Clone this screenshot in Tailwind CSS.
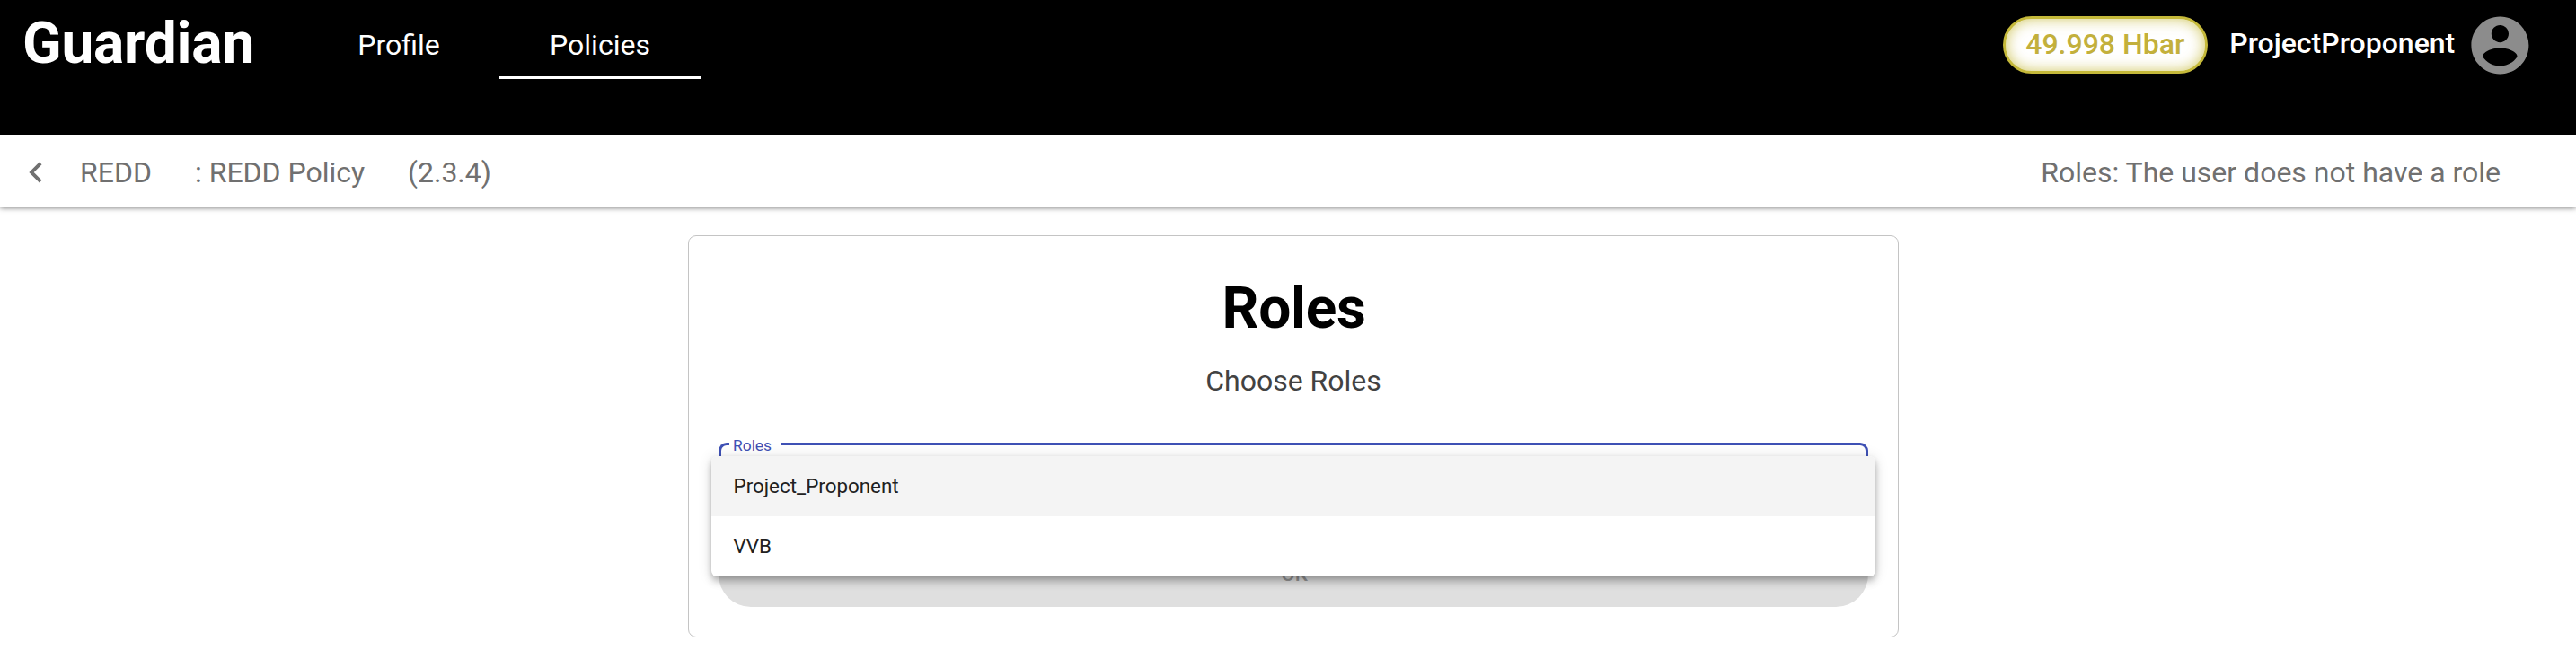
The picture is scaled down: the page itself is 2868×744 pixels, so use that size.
<!DOCTYPE html>
<html lang="en">
<head>
<meta charset="utf-8">
<title>Guardian</title>
<script src="https://cdn.jsdelivr.net/npm/@tailwindcss/browser@4"></script>
</head>
<body class="h-[744px] overflow-hidden bg-white font-['Roboto',sans-serif] text-[32px] leading-[40px] whitespace-nowrap">
  <header class="flex h-[150px] items-start bg-black text-white">
    <h1 class="ml-[25px] w-[307px] pt-[9px] text-[64px] leading-[80px] font-bold tracking-[-0.2px]">Guardian</h1>
    <nav class="flex">
      <a class="h-[88px] w-[224px] pt-[30px] text-center">Profile</a>
      <a class="h-[88px] w-[224px] border-b-3 border-white pt-[30px] text-center">Policies</a>
    </nav>
    <div class="mr-[46px] ml-auto flex h-[100px] items-center font-medium">
      <div class="flex h-16 w-[228px] items-center justify-center rounded-full border-3 border-[#c5b93a] bg-white pr-px pb-[3px] text-[#c3b03c] shadow-[inset_0_0_16px_rgba(197,185,58,0.8)]">49.998 Hbar</div>
      <span class="ml-[24px] w-[263px] pb-[4px]">ProjectProponent</span>
      <svg class="size-[76.8px] text-[#8c8c8c]" viewBox="0 0 24 24" fill="currentColor"><path d="M12 2C6.48 2 2 6.48 2 12s4.48 10 10 10 10-4.48 10-10S17.52 2 12 2zm0 3c1.66 0 3 1.34 3 3s-1.34 3-3 3-3-1.34-3-3 1.34-3 3-3zm0 14.2c-2.5 0-4.71-1.28-6-3.22.03-1.99 4-3.08 6-3.08 1.99 0 5.97 1.09 6 3.08-1.29 1.94-3.5 3.22-6 3.22z"/></svg>
    </div>
  </header>

  <div class="flex h-20 items-center bg-white pt-[4px] pr-[84px] text-[#707070] shadow-[0_1px_6px_rgba(0,0,0,0.6)]">
    <svg class="ml-[17px] size-[46px]" viewBox="0 0 24 24" fill="currentColor"><path d="M15.41 7.41 14 6l-6 6 6 6 1.41-1.41L10.83 12z"/></svg>
    <span class="ml-[26px] w-[128px]">REDD</span>
    <span class="w-[237px]">: REDD Policy</span>
    <span>(2.3.4)</span>
    <span class="ml-auto">Roles: The user does not have a role</span>
  </div>

  <main class="relative mt-[32px] ml-[766px] flex h-[448px] w-[1348px] flex-col items-center rounded-[9px] border border-[#c4c4c4] px-[33px]">
    <h2 class="mt-[41px] pl-px text-[64px] leading-[80px] font-bold tracking-[-0.3px] text-black">Roles</h2>
    <p class="mt-[20px] text-[#424242]">Choose Roles</p>
    <!-- outlined select with a notch for its floating label -->
    <div class="mt-[49px] flex h-[90px] w-[1280px] text-[#3f51b5]">
      <div class="w-3 rounded-l-[9px] border-3 border-r-0 border-current"></div>
      <div class="w-[58px] border-b-3 border-current pl-[4px]"><span class="relative -top-[7px] block text-[17.4px] leading-[20px]">Roles</span></div>
      <div class="flex-1 rounded-r-[9px] border-3 border-l-0 border-current"></div>
    </div>
    <button class="mt-[21px] h-[72px] w-[1280px] shrink-0 rounded-full bg-[#dfdfdf] pb-[3px] pl-[2px] text-[22.4px] font-medium text-[#959595]">OK</button>

    <div class="absolute top-[245px] left-[24.5px] w-[1296.5px] overflow-hidden rounded-[6.4px] bg-white text-[22.4px] leading-[67px] text-[#212121] shadow-[0_3.2px_6.4px_-1.6px_rgba(0,0,0,0.2),0_6.4px_8px_rgba(0,0,0,0.14),0_1.6px_16px_rgba(0,0,0,0.12)]">
      <div class="bg-[#f4f4f4] pl-[25px]">Project_Proponent</div>
      <div class="pl-[25px]">VVB</div>
    </div>
  </main>
</body>
</html>
